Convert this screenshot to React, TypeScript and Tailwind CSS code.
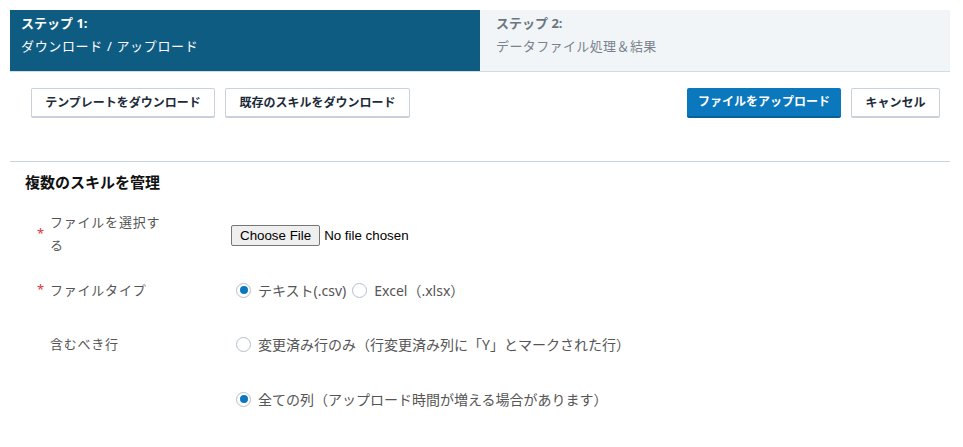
import { ReactNode } from "react";

const jp = { fontFamily: '"Noto Sans", "Noto Sans CJK JP", sans-serif' };

const Radio = ({ checked, label }: { checked?: boolean; label: string }) => (
  <label className="flex items-center gap-[7px] text-[14px] text-[#555]">
    <span className="flex h-[15px] w-[15px] items-center justify-center rounded-full border border-[#b4bfca] bg-white">
      {checked && <span className="h-[8px] w-[8px] rounded-full bg-[#0b77bd]" />}
    </span>
    {label}
  </label>
);

const Row = ({ required, label, children, className }: { required?: boolean; label: ReactNode; children: ReactNode; className?: string }) => (
  <div className={"flex items-center " + (className ?? "")}>
    <div className="w-[40px] pl-[27px] text-[13px] text-[#e0343d]">{required ? "*" : ""}</div>
    <div className="w-[181px] pr-[60px] text-[13px] leading-[23px] tracking-[0.06em] text-[#555]">{label}</div>
    <div className="flex-1">{children}</div>
  </div>
);

const OutlineButton = ({ children, w }: { children: ReactNode; w: string }) => (
  <button className={"h-[30px] rounded-[2px] border border-[#c9d1da] border-b-2 bg-white text-[12px] font-bold text-[#1c2b3a] " + w}>
    {children}
  </button>
);

export default function App() {
  return (
    <div className="min-h-screen bg-white pl-[10px] pr-[13px] pt-[10px]" style={jp}>
      {/* Steps */}
      <div className="flex h-[62px] border-b border-[#d3dbe3]">
        <div className="w-[470px] bg-[#0f5c83] pl-[11px] pt-[3px] text-white">
          <div className="text-[13px] font-bold leading-[20px]">ステップ 1:</div>
          <div className="mt-[3px] text-[13px] leading-[20px] tracking-[0.05em]">ダウンロード / アップロード</div>
        </div>
        <div className="flex-1 bg-[#f1f5f8] pl-[16px] pt-[3px] text-[#6b7580]">
          <div className="text-[13px] font-bold leading-[20px]">ステップ 2:</div>
          <div className="mt-[3px] text-[13px] leading-[20px] tracking-[0.03em] text-[#7a838c]">データファイル処理＆結果</div>
        </div>
      </div>

      {/* Actions */}
      <div className="flex items-center pl-[21px] pr-[10px] pt-[16px]">
        <OutlineButton w="w-[184px]">テンプレートをダウンロード</OutlineButton>
        <div className="ml-[10px]">
          <OutlineButton w="w-[185px]">既存のスキルをダウンロード</OutlineButton>
        </div>
        <div className="flex-1" />
        <button className="h-[30px] w-[154px] rounded-[2px] border-b-2 border-[#0a5f97] bg-[#0b77bd] text-[12px] font-bold text-white">
          ファイルをアップロード
        </button>
        <div className="ml-[10px]">
          <OutlineButton w="w-[89px]">キャンセル</OutlineButton>
        </div>
      </div>

      <div className="mt-[43px] border-t border-[#c9d3dc]" />

      <div className="pl-[15px] pt-[9px] text-[15px] font-bold text-[#111]">複数のスキルを管理</div>

      <div className="mt-[17px] flex flex-col">
        <Row required label="ファイルを選択する">
          <input
            type="file"
            className="text-[13.33px] text-black file:mr-[4px] file:h-[21px] file:rounded-[2px] file:border file:border-[#767676] file:bg-[#efefef] file:px-[8px] file:text-black"
            style={{ fontFamily: '"Liberation Sans", Arial, sans-serif' }}
          />
        </Row>
        <Row required label="ファイルタイプ" className="mt-[22px]">
          <div className="flex items-center gap-[6px] pl-[5px]">
            <Radio checked label="テキスト(.csv)" />
            <Radio label="Excel（.xlsx）" />
          </div>
        </Row>
        <Row label="含むべき行" className="mt-[31px]">
          <div className="pl-[5px]">
            <Radio label="変更済み行のみ（行変更済み列に「Y」とマークされた行）" />
          </div>
        </Row>
        <Row label="" className="mt-[33px]">
          <div className="pl-[5px]">
            <Radio checked label="全ての列（アップロード時間が増える場合があります）" />
          </div>
        </Row>
      </div>
    </div>
  );
}
